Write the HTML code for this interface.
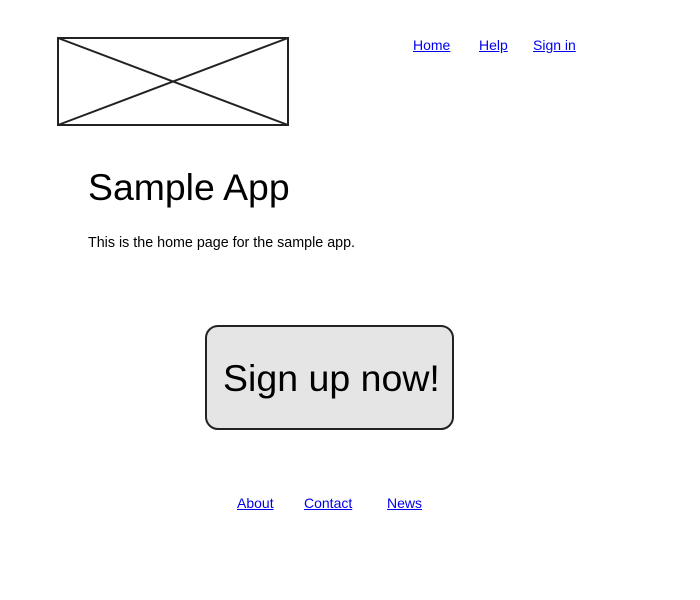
<!DOCTYPE html>
<html><head><style>
body{margin:0;width:700px;height:600px;background:#fff;font-family:"Liberation Sans",sans-serif;position:relative;overflow:hidden}
a{color:#00e;text-decoration:underline;font-size:14px;position:absolute;line-height:16px}
.abs{position:absolute;margin:0}
</style></head><body>
<svg class="abs" style="left:57px;top:37px" width="232" height="89">
<rect x="1" y="1" width="230" height="87" fill="none" stroke="#222" stroke-width="2"/>
<line x1="1" y1="1" x2="231" y2="88" stroke="#222" stroke-width="2"/>
<line x1="1" y1="88" x2="231" y2="1" stroke="#222" stroke-width="2"/>
</svg>
<a style="left:413px;top:37px">Home</a>
<a style="left:479px;top:37px">Help</a>
<a style="left:533px;top:37px">Sign in</a>
<div class="abs" style="left:88px;top:165px;font-size:37.4px;line-height:44px">Sample App</div>
<div class="abs" style="left:88px;top:235px;font-size:14.3px;line-height:16px">This is the home page for the sample app.</div>
<div class="abs" style="left:205px;top:325px;width:245px;height:101px;border:2px solid #222;border-radius:13px;background:#e5e5e5"></div>
<div class="abs" style="left:223px;top:356px;font-size:37.5px;line-height:44px">Sign up now!</div>
<a style="left:237px;top:495px">About</a>
<a style="left:304px;top:495px">Contact</a>
<a style="left:387px;top:495px">News</a>
</body></html>
